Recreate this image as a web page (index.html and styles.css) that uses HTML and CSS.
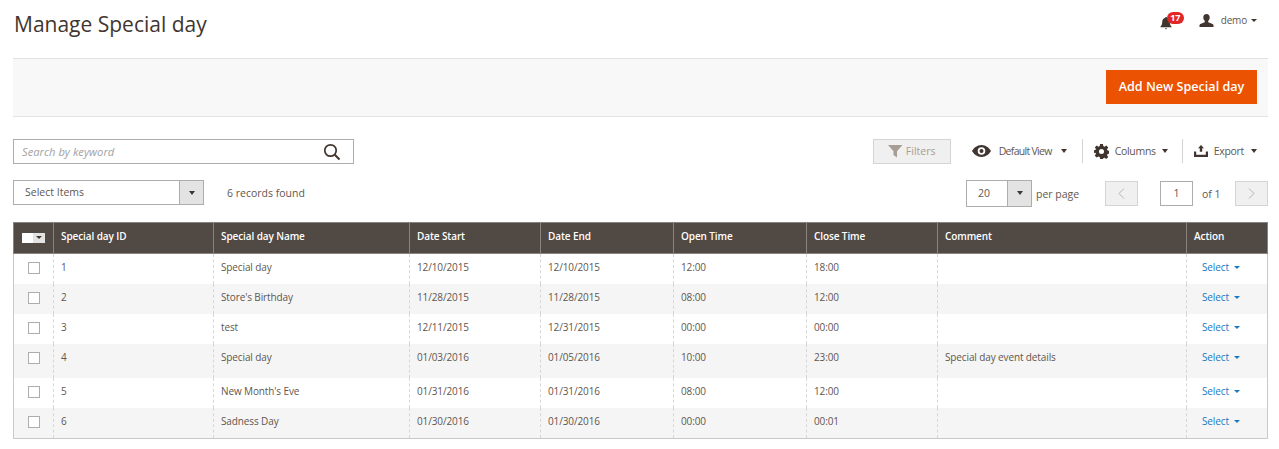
FILE: index.html
```html
<!DOCTYPE html>
<html lang="en">
<head>
<meta charset="utf-8">
<title>Manage Special day</title>
<link rel="stylesheet" href="styles.css">
</head>
<body>
<header class="page-head">
  <h1 class="title">Manage Special day</h1>
  <div class="head-actions">
    <div class="bell">
      <svg class="bell-icon" viewBox="0 0 12 14" width="12" height="14"><path d="M6 1c.6 0 1 .4 1 .9C9 2.400 9.800 4 9.800 6c0 2.500.7 3.600 1.700 4.500v.8H.5v-.8C1.500 9.600 2.200 8.500 2.200 6c0-2 .8-3.600 2.800-4.100C5 1.400 5.400 1 6 1z" fill="#41362f"/><path d="M4.800 12.200h2.400L6 13.600z" fill="#41362f"/></svg>
      <span class="badge">17</span>
    </div>
    <div class="user">
      <svg viewBox="0 0 15 13" width="15" height="13"><path d="M7.500 0c2 0 3.200 1.400 3.200 3.400 0 1.500-.7 2.800-1.500 3.500v1.300c1.700.7 4.800 1.400 5.300 2.800V13H.5v-2c.5-1.400 3.600-2.100 5.300-2.800V6.900C5 6.200 4.300 4.900 4.300 3.400 4.300 1.400 5.500 0 7.500 0z" fill="#41362f"/></svg>
      <span class="user-name">demo</span>
      <span class="caret small"></span>
    </div>
  </div>
</header>

<div class="action-bar">
  <button class="primary" type="button">Add New Special day</button>
</div>

<div class="toolbar">
  <div class="search">
    <span class="placeholder">Search by keyword</span>
    <svg viewBox="0 0 18 18" width="18" height="18"><circle cx="7.500" cy="7.500" r="5.700" fill="none" stroke="#41362f" stroke-width="1.700"/><path d="M11.800 11.800l4.700 4.700" stroke="#41362f" stroke-width="2" fill="none"/></svg>
  </div>
  <div class="tools">
    <button class="filters" type="button">
      <svg viewBox="0 0 15 13" width="15" height="13"><path d="M0 0h14.500L9 6.300V12.500L5.500 10V6.300z" fill="#a79d95"/></svg>
      <span>Filters</span>
    </button>
    <div class="tool tool-view">
      <svg viewBox="0 0 19 12" width="19" height="12"><path fill-rule="evenodd" d="M9.500 0C14 0 17.500 3.200 19 6c-1.500 2.800-5 6-9.500 6S1.500 8.800 0 6C1.500 3.200 5 0 9.500 0zm0 2.200a3.800 3.800 0 1 0 0 7.600 3.800 3.800 0 0 0 0-7.600zm0 1.800a2 2 0 1 1 0 4 2 2 0 0 1 0-4z" fill="#41362f"/></svg>
      <span class="tight">Default View</span>
      <span class="caret"></span>
    </div>
    <div class="tool tool-cols">
      <svg viewBox="0 0 16 16" width="15" height="15"><path fill-rule="evenodd" d="M6.500 0h3l.4 2.200 1.300.6L13.100 1.500l2.100 2.100-1.300 1.900.6 1.300 2.200.4v3l-2.200.4-.6 1.300 1.300 1.900-2.100 2.100-1.900-1.300-1.300.6L9.500 16h-3l-.4-2.200-1.300-.6-1.900 1.300-2.100-2.100 1.300-1.900-.6-1.300L0 9.700v-3l1.500-.3.600-1.300L.8 3.600l2.100-2.100 1.900 1.300 1.300-.6zM8 5.300a2.700 2.700 0 1 0 0 5.400 2.700 2.700 0 0 0 0-5.400z" fill="#41362f"/></svg>
      <span class="tight">Columns</span>
      <span class="caret"></span>
    </div>
    <div class="tool tool-export">
      <svg viewBox="0 0 14 12" width="14" height="12"><path d="M7 0l3 3.300H8.200v3.500H5.800V3.300H4zM0 6.500h2.200v3.200h9.600V6.500H14V12H0z" fill="#41362f"/></svg>
      <span class="tight">Export</span>
      <span class="caret"></span>
    </div>
  </div>
</div>

<div class="pager-row">
  <div class="left-group">
    <div class="select select-items">
      <span class="select-label">Select Items</span>
      <span class="select-btn"><span class="caret"></span></span>
    </div>
    <span class="records">6 records found</span>
  </div>
  <div class="right-group">
    <div class="select select-page">
      <span class="select-label">20</span>
      <span class="select-btn"><span class="caret"></span></span>
    </div>
    <span class="per-page">per page</span>
    <span class="page-btn prev"><svg viewBox="0 0 7 11" width="7" height="11"><path d="M6 .5L1 5.500l5 5" fill="none" stroke="#b9b1ab" stroke-width="1"/></svg></span>
    <span class="page-num">1</span>
    <span class="of">of 1</span>
    <span class="page-btn next"><svg viewBox="0 0 7 11" width="7" height="11"><path d="M1 .5l5 5-5 5" fill="none" stroke="#b9b1ab" stroke-width="1"/></svg></span>
  </div>
</div>

<table class="grid">
  <colgroup>
    <col class="c-check"><col class="c-id"><col class="c-name"><col class="c-start"><col class="c-end"><col class="c-open"><col class="c-close"><col class="c-comment"><col class="c-action">
  </colgroup>
  <thead>
    <tr>
      <th class="th-mass"><span class="mass"><span class="mass-box"></span><span class="mass-arrow"><span class="caret tiny"></span></span></span></th>
      <th>Special day ID</th>
      <th>Special day Name</th>
      <th>Date Start</th>
      <th>Date End</th>
      <th>Open Time</th>
      <th>Close Time</th>
      <th>Comment</th>
      <th>Action</th>
    </tr>
  </thead>
  <tbody>
    <tr class="r30"><td class="chk"><span class="cb"></span></td><td>1</td><td>Special day</td><td>12/10/2015</td><td>12/10/2015</td><td>12:00</td><td>18:00</td><td></td><td class="act"><span class="sel">Select</span><span class="caret blue"></span></td></tr>
    <tr class="r30 alt"><td class="chk"><span class="cb"></span></td><td>2</td><td>Store's Birthday</td><td>11/28/2015</td><td>11/28/2015</td><td>08:00</td><td>12:00</td><td></td><td class="act"><span class="sel">Select</span><span class="caret blue"></span></td></tr>
    <tr class="r30"><td class="chk"><span class="cb"></span></td><td>3</td><td>test</td><td>12/11/2015</td><td>12/31/2015</td><td>00:00</td><td>00:00</td><td></td><td class="act"><span class="sel">Select</span><span class="caret blue"></span></td></tr>
    <tr class="r34 alt"><td class="chk"><span class="cb"></span></td><td>4</td><td>Special day</td><td>01/03/2016</td><td>01/05/2016</td><td>10:00</td><td>23:00</td><td>Special day event details</td><td class="act"><span class="sel">Select</span><span class="caret blue"></span></td></tr>
    <tr class="r30"><td class="chk"><span class="cb"></span></td><td>5</td><td>New Month's Eve</td><td>01/31/2016</td><td>01/31/2016</td><td>08:00</td><td>12:00</td><td></td><td class="act"><span class="sel">Select</span><span class="caret blue"></span></td></tr>
    <tr class="r31 alt"><td class="chk"><span class="cb"></span></td><td>6</td><td>Sadness Day</td><td>01/30/2016</td><td>01/30/2016</td><td>00:00</td><td>00:01</td><td></td><td class="act"><span class="sel">Select</span><span class="caret blue"></span></td></tr>
  </tbody>
</table>
</body>
</html>
```
FILE: styles.css
```css
* { box-sizing: border-box; }
html, body { height: 100%; }
body {
  margin: 0;
  padding: 0 11px 0 13px;
  background: #fff;
  color: #41362f;
  font-family: "Open Sans", "Liberation Sans", sans-serif;
  font-size: 10.5px;
  overflow: hidden;
}
button { font-family: inherit; }

.page-head { height: 58px; display: flex; justify-content: space-between; align-items: flex-start; }
.title { margin: 9px 0 0 1px; font-size: 21px; line-height: 30px; font-weight: 400; color: #41362f; }
.head-actions { display: flex; align-items: center; margin-top: 11px; height: 18px; }
.bell { position: relative; width: 12px; height: 14px; margin-right: 27px; margin-top: 5px; }
.bell-icon { display: block; }
.badge {
  position: absolute; left: 7px; top: -4px; width: 17px; height: 12px; border-radius: 6px;
  background: #e22626; color: #fff; font-size: 9px; font-weight: 700; line-height: 12px; text-align: center;
}
.user { display: flex; align-items: center; margin-right: 11px; }
.user svg { display: block; }
.user-name { margin-left: 7px; color: #5f564f; font-size: 10px; letter-spacing: -0.2px; }
.caret {
  display: inline-block; width: 0; height: 0;
  border-left: 3.500px solid transparent; border-right: 3.500px solid transparent; border-top: 4px solid #41362f;
}
.caret.small { margin-left: 4px; border-left-width: 3px; border-right-width: 3px; border-top-width: 3px; }
.caret.tiny { border-left-width: 3px; border-right-width: 3px; border-top-width: 3px; }
.caret.blue { margin-left: 5px; border-top-color: #1979c3; border-top-width: 3px; position: relative; top: -2px; }

.action-bar {
  height: 59px; background: #f8f8f8; border-top: 1px solid #e3e3e3; border-bottom: 1px solid #e3e3e3;
  display: flex; justify-content: flex-end; align-items: center; padding: 0 11px 2px 0;
}
.primary {
  width: 151px; height: 34px; background: #eb5202; border: 0; color: #fff;
  font-size: 12.6px; font-weight: 600; padding: 0;
}

.toolbar { display: flex; justify-content: space-between; align-items: center; height: 36px; margin-top: 16px; padding-top: 1px; }
.search {
  width: 341px; height: 25px; border: 1px solid #adadad; display: flex; justify-content: space-between; align-items: center;
  padding: 0 12px 0 8px;
}
.placeholder { font-style: italic; color: #a2a2a2; font-size: 11.2px; }
.search svg { display: block; }
.tools { display: flex; align-items: center; height: 25px; margin-right: 11px; padding-bottom: 1px; }
.filters {
  width: 78px; height: 25px; background: #f0f0f0; border: 1px solid #d4d4d4; color: #a79d95;
  display: flex; align-items: center; justify-content: center; gap: 3px; padding: 0; font-size: 10.500px;
}
.tool { display: flex; align-items: center; height: 24px; color: #5f564f; }
.tool svg { display: block; }
.tight { letter-spacing: -0.3px; font-size: 10.500px; }
.tool .caret { margin-left: 7px; }
.tool-view { margin-left: 21px; width: 111px; border-right: 1px solid #d4d4d4; }
.tool-view .tight { margin-left: 8px; letter-spacing: -0.7px; }
.tool-view .caret { margin-left: 9px; }
.tool-cols { width: 100px; padding-left: 11px; border-right: 1px solid #d4d4d4; }
.tool-cols .tight { margin-left: 6px; }
.tool-cols .caret { margin-left: 6px; }
.tool-export { padding-left: 11px; }
.tool-export .tight { margin-left: 6px; }

.pager-row { display: flex; justify-content: space-between; align-items: flex-start; height: 26px; margin-top: 11px; }
.left-group, .right-group { display: flex; align-items: center; }
.right-group { margin-top: 1px; height: 25px; }
.select { display: flex; height: 25px; border: 1px solid #adadad; }
.select-items { width: 191px; }
.select-page { width: 66px; height: 27px; margin-top: -1px; }
.select-label { flex: 1; padding-left: 11px; line-height: 22px; font-size: 10.500px; color: #5f564f; }
.select-page .select-label { line-height: 24px; }
.select-btn { width: 24px; background: #e3e3e3; border-left: 1px solid #adadad; display: flex; align-items: center; justify-content: center; }
.records { margin-left: 23px; color: #5f564f; font-size: 10.500px; }
.per-page { margin-left: 4px; width: 69px; color: #5f564f; }
.page-btn { width: 33px; height: 25px; background: #f0f0f0; border: 1px solid #d4d4d4; display: flex; align-items: center; justify-content: center; }
.page-num { margin-left: 22px; width: 33px; height: 25px; border: 1px solid #adadad; text-align: center; line-height: 23px; color: #5f564f; }
.of { margin-left: 9px; width: 33px; color: #5f564f; }

.grid { margin-top: 16px; width: 1254px; table-layout: fixed; border-collapse: collapse; border: 1px solid #c9c9c9; }
.c-check { width: 40px; }
.c-id { width: 160px; }
.c-name { width: 196px; }
.c-start { width: 131px; }
.c-end { width: 133px; }
.c-open { width: 133px; }
.c-close { width: 131px; }
.c-comment { width: 249px; }
.c-action { width: 81px; }
.grid thead tr { height: 31px; }
.grid th {
  background: #514943; color: #fff; font-weight: 600; font-size: 10px; letter-spacing: -0.1px; text-align: left;
  padding: 0 7px 4px; border: 1px solid #8a837e;
}
.grid th.th-mass { padding: 0 0 1px; }
.grid td {
  padding: 6px 7px 0; border-left: 1px dashed #d6d6d6; color: #5f564f; font-size: 10px; letter-spacing: -0.12px;
  line-height: 14px; vertical-align: top;
}
.grid td:first-child { border-left: 0; }
.r30 { height: 30px; }
.r31 { height: 31px; }
.r34 { height: 34px; }
.alt td { background: #f5f5f5; }
.grid td.chk { padding: 8px 0 0; }
.cb { display: block; width: 12px; height: 12px; border: 1px solid #adadad; background: #fff; margin: 0 auto; }
.grid td.act { padding-left: 15px; }
.sel { color: #1979c3; }
.mass { display: flex; height: 10px; width: 23px; margin: 0 auto; }
.mass-box { width: 11px; background: #fff; }
.mass-arrow { width: 12px; background: #e3e3e3; display: flex; align-items: center; justify-content: center; }
.mass-arrow .caret { border-top-color: #41362f; }
```
